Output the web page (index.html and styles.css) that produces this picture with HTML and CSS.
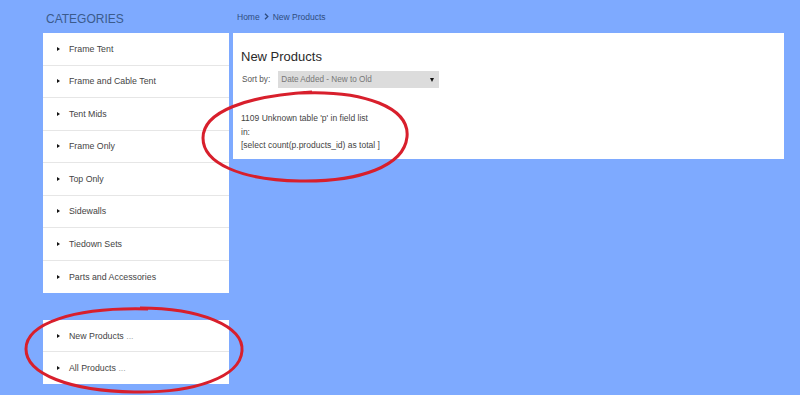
FILE: index.html
```html
<!DOCTYPE html>
<html lang="en">
<head>
    <meta charset="UTF-8">
    <meta name="viewport" content="width=device-width, initial-scale=1.0">
    <title>New Products</title>
    <link rel="stylesheet" href="styles.css">
</head>
<body>
    <div class="page">
        <aside class="sidebar">
            <h2 class="side-title">CATEGORIES</h2>
            <ul class="side-box">
                <li><a href="#">Frame Tent</a></li>
                <li><a href="#">Frame and Cable Tent</a></li>
                <li><a href="#">Tent Mids</a></li>
                <li><a href="#">Frame Only</a></li>
                <li><a href="#">Top Only</a></li>
                <li><a href="#">Sidewalls</a></li>
                <li><a href="#">Tiedown Sets</a></li>
                <li><a href="#">Parts and Accessories</a></li>
            </ul>
            <ul class="side-box side-box-extra">
                <li><a href="#">New Products <span class="dots">...</span></a></li>
                <li><a href="#">All Products <span class="dots">...</span></a></li>
            </ul>
        </aside>
        <main class="content">
            <div class="crumbs">
                <a href="#">Home</a>
                <svg class="crumb-sep" width="5" height="7" viewBox="0 0 5 7"><path d="M1 0.8 L3.8 3.5 L1 6.2" fill="none" stroke="#2f4d80" stroke-width="1.3"/></svg>
                <span>New Products</span>
            </div>
            <section class="panel">
                <h1>New Products</h1>
                <div class="sort-row">
                    <label>Sort by:</label>
                    <div class="select">
                        <span>Date Added - New to Old</span>
                        <span class="caret"></span>
                    </div>
                </div>
                <div class="error">
                    1109 Unknown table 'p' in field list<br>
                    in:<br>
                    [select count(p.products_id) as total ]
                </div>
            </section>
        </main>
    </div>
    <!-- red marker circles drawn over the page -->
    <svg class="marks" width="800" height="395" viewBox="0 0 800 395">
        <path d="M300 93 C365 90 410 108 407 137 C404 166 360 182 300 181 C240 180 203 163 203 138 C203 112 245 96 312 92" fill="none" stroke="#d81f2c" stroke-width="3"/>
        <path d="M140 308 C200 308 244 326 242 351 C240 377 195 393 134 392 C70 391 26 374 26 349 C26 324 72 307 148 309" fill="none" stroke="#d81f2c" stroke-width="3"/>
    </svg>
</body>
</html>
```
FILE: styles.css
```css
body {
    margin: 0;
    padding: 0;
    background-color: #7eaaff;
    font-family: "Liberation Sans", Arial, sans-serif;
    color: #444;
    height: 395px;
    overflow: hidden;
}
a {
    color: inherit;
    text-decoration: none;
}
.page {
    display: flex;
    gap: 4px;
    padding-left: 43px;
}
.sidebar {
    width: 186px;
}
.side-title {
    margin: 0;
    height: 33px;
    box-sizing: border-box;
    padding: 12px 0 0 3px;
    font-size: 12px;
    font-weight: normal;
    line-height: 14px;
    color: #3b5b8c;
}
.side-box {
    list-style: none;
    margin: 0;
    padding: 0;
    background: #fff;
}
.side-box li {
    height: 32.5px;
    box-sizing: border-box;
    border-bottom: 1px solid #e6e6e6;
    display: flex;
    align-items: center;
    padding-left: 14px;
    font-size: 8.8px;
    color: #444;
}
.side-box li:last-child {
    border-bottom: none;
}
.side-box li::before {
    content: "";
    border-left: 3px solid #111;
    border-top: 2.5px solid transparent;
    border-bottom: 2.5px solid transparent;
    margin-right: 9px;
}
.side-box-extra {
    margin-top: 27px;
}
.side-box-extra li {
    height: 32px;
}
.dots {
    color: #aaa;
}
.content {
    width: 551px;
}
.crumbs {
    height: 33px;
    display: flex;
    align-items: center;
    gap: 4px;
    padding-left: 4px;
    font-size: 8.5px;
    color: #2f4d80;
}
.panel {
    background: #fff;
    padding: 16px 8px 6px;
}
.panel h1 {
    margin: 0;
    font-size: 13px;
    font-weight: normal;
    line-height: 15px;
    color: #2a2a2a;
}
.sort-row {
    margin-top: 7px;
    display: flex;
    align-items: center;
    gap: 8px;
    padding-left: 1px;
    font-size: 8.2px;
    color: #555;
}
.select {
    width: 161px;
    height: 17px;
    box-sizing: border-box;
    background: #dcdcdc;
    color: #777;
    display: flex;
    align-items: center;
    justify-content: space-between;
    padding: 0 5px 0 3px;
}
.caret {
    border-top: 4px solid #111;
    border-left: 2.5px solid transparent;
    border-right: 2.5px solid transparent;
}
.error {
    margin-top: 24px;
    font-size: 8.5px;
    line-height: 13.5px;
    color: #444;
}
.marks {
    position: absolute;
    top: 0;
    left: 0;
    pointer-events: none;
}
```
